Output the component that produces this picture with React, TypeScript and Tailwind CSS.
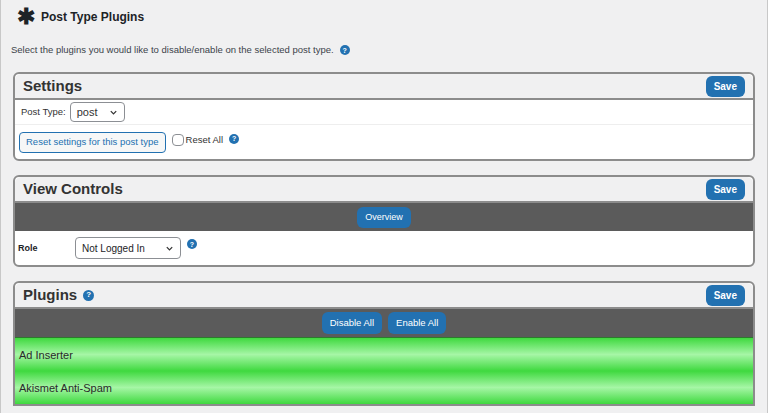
const font = { fontFamily: "'Liberation Sans', 'Open Sans', sans-serif" };

const Help = ({ size = 11 }: { size?: number }) => (
  <span
    className="inline-flex items-center justify-center rounded-full bg-[#2271b1] text-white font-bold leading-none"
    style={{ width: size, height: size, fontSize: size - 3 }}
  >
    ?
  </span>
);

const SaveBtn = () => (
  <button className="rounded-md bg-[#2271b1] px-2 py-[3px] text-[10px] font-bold text-white">Save</button>
);

const Chevron = () => (
  <svg width="9" height="9" viewBox="0 0 10 10" fill="none" stroke="#333" strokeWidth="1.4">
    <path d="M2 3.5 5 6.5 8 3.5" />
  </svg>
);

const Header = ({ title, help }: { title: string; help?: boolean }) => (
  <div className="flex h-[26px] items-center justify-between rounded-t-md border-b-2 border-[#8c8c8c] bg-[#f0f0f1] px-2">
    <div className="flex items-center gap-1.5 text-[15px] font-bold text-[#333]">
      {title}
      {help && <Help size={11} />}
    </div>
    <SaveBtn />
  </div>
);

const Green = ({ name }: { name: string }) => (
  <div className="flex h-[33px] items-center bg-[linear-gradient(#3fd93f,#a6f6a6_50%,#3fd93f)] px-1 text-[11px] text-[#2a2a2a]">
    {name}
  </div>
);

export default function App() {
  return (
    <div className="h-[413px] w-[768px] overflow-hidden bg-[#f0f0f1] border-x border-[#c8c8c8]" style={font}>
      <div className="flex items-center gap-1.5 px-4 pt-[6px] text-[12px] font-bold text-[#1d2327]">
        <span className="text-[22px] leading-none font-black">✱</span>
        Post Type Plugins
      </div>
      <div className="mt-[15px] flex items-center gap-1.5 px-[10px] text-[9.5px] text-[#3c434a]">
        Select the plugins you would like to disable/enable on the selected post type.
        <Help size={10} />
      </div>

      <div className="mx-[12px] mt-[15px] rounded-md border-2 border-[#8c8c8c] bg-white">
        <Header title="Settings" />
        <div className="flex h-[25px] items-center gap-1 border-b border-[#eee] px-[6px] text-[9.5px] text-[#333]">
          Post Type:
          <div className="flex h-[20px] w-[55px] items-center justify-between rounded border border-[#8c8f94] px-1.5 text-[11px]">
            post <Chevron />
          </div>
        </div>
        <div className="flex h-[34px] items-center gap-1.5 px-[4px]">
          <button className="h-[21px] rounded border border-[#2271b1] bg-[#f6f7f7] px-1.5 text-[9.5px] text-[#2271b1]">
            Reset settings for this post type
          </button>
          <label className="mb-1 flex items-center gap-0.5 text-[9.5px] text-[#333]">
            <span className="h-[12px] w-[12px] rounded-sm border border-[#8c8f94] bg-white" />
            Reset All
          </label>
          <span className="mb-3">
            <Help size={10} />
          </span>
        </div>
      </div>

      <div className="mx-[12px] mt-[14px] rounded-md border-2 border-[#8c8c8c] bg-white">
        <Header title="View Controls" />
        <div className="flex h-[28px] items-center justify-center bg-[#5b5b5b]">
          <button className="rounded-md bg-[#2271b1] px-2 py-1 text-[9px] text-white">Overview</button>
        </div>
        <div className="flex h-[34px] items-center px-[3px] text-[9px] font-bold text-[#1d2327]">
          <span className="w-[57px]">Role</span>
          <div className="flex h-[22px] w-[106px] items-center justify-between rounded border border-[#8c8f94] px-1.5 text-[10px] font-normal">
            Not Logged In <Chevron />
          </div>
          <span className="ml-1.5 mb-2">
            <Help size={10} />
          </span>
        </div>
      </div>

      <div className="mx-[12px] mt-[14px] rounded-t-md border-2 border-[#8c8c8c] bg-white">
        <Header title="Plugins" help />
        <div className="flex h-[29px] items-center justify-center gap-1.5 bg-[#5b5b5b] border-b border-[#2d7a2d]">
          <button className="rounded-md bg-[#2271b1] px-2 py-1 text-[9.5px] text-white">Disable All</button>
          <button className="rounded-md bg-[#2271b1] px-2 py-1 text-[9.5px] text-white">Enable All</button>
        </div>
        <Green name="Ad Inserter" />
        <Green name="Akismet Anti-Spam" />
      </div>
    </div>
  );
}
